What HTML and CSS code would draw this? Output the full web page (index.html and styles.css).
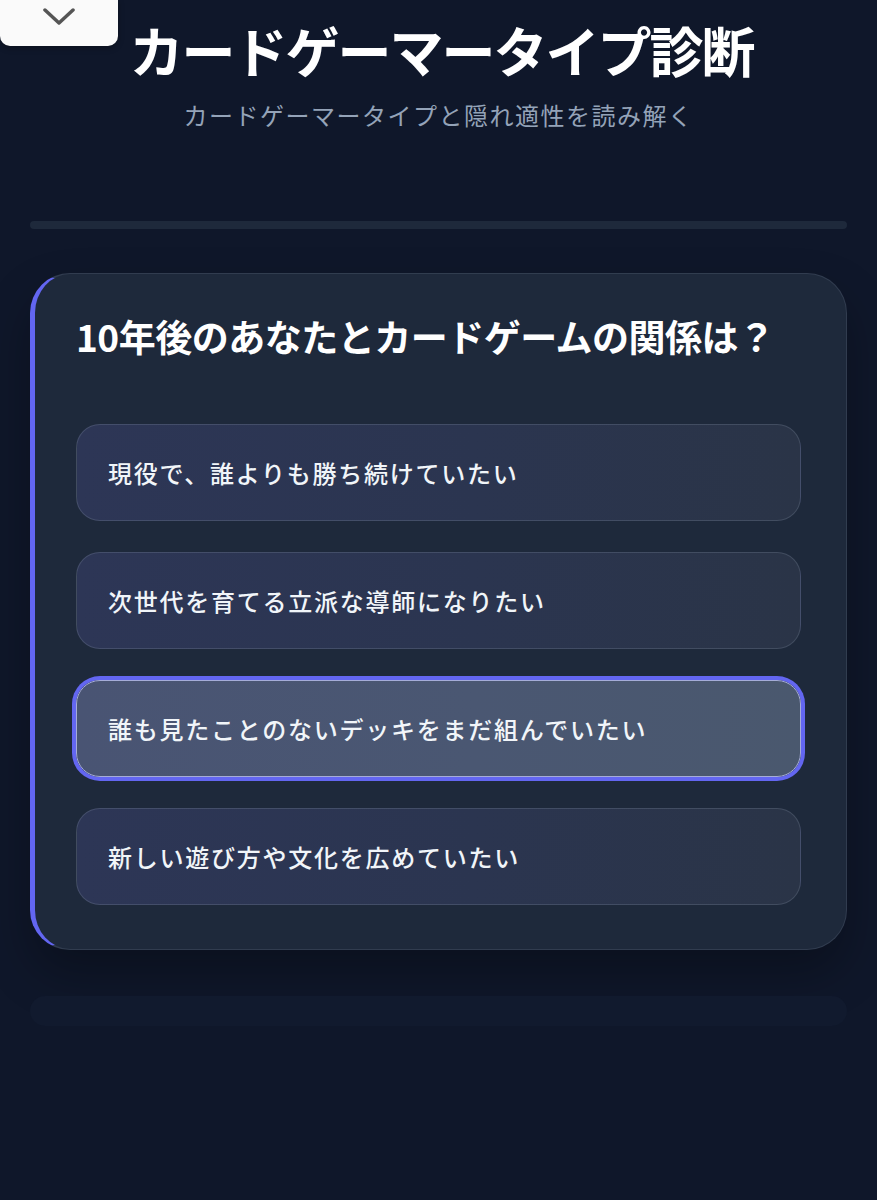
FILE: index.html
```html
<!DOCTYPE html>
<html lang="ja">
<head>
  <meta charset="UTF-8">
  <meta name="viewport" content="width=877, initial-scale=1.0">
  <title>カードゲーマータイプ診断</title>
  <link rel="stylesheet" href="styles.css">
</head>
<body>
  <button class="collapse-tab" aria-label="閉じる">
    <svg viewBox="0 0 32 20">
      <polyline points="2,3 16,16 30,3"/>
    </svg>
  </button>

  <div class="page">
    <header class="page-head">
      <h1 class="page-title">カードゲーマータイプ診断</h1>
      <p class="page-sub">カードゲーマータイプと隠れ適性を読み解く</p>
    </header>

    <div class="progress"><div class="progress-fill"></div></div>

    <section class="question-card">
      <h2 class="question-title">10年後のあなたとカードゲームの関係は？</h2>
      <div class="option-list">
        <button class="option-btn">現役で、誰よりも勝ち続けていたい</button>
        <button class="option-btn">次世代を育てる立派な導師になりたい</button>
        <button class="option-btn selected">誰も見たことのないデッキをまだ組んでいたい</button>
        <button class="option-btn">新しい遊び方や文化を広めていたい</button>
      </div>
    </section>

    <div class="nav-placeholder"></div>
  </div>
</body>
</html>
```

FILE: styles.css
```css
:root {
  --bg: #0f172a;
  --card: #1e293b;
  --point: #6366f1;
  --text-strong: #ffffff;
  --text-sub: #94a3b8;
  --option-border: rgba(148, 163, 184, 0.22);
  --font: "Noto Sans CJK JP", "Noto Sans", sans-serif;
}
body {
  margin: 0;
  padding: 0;
  background: var(--bg);
  font-family: var(--font);
  min-height: 1200px;
  box-sizing: border-box;
}
.collapse-tab {
  position: absolute;
  top: 0;
  left: 0;
  width: 118px;
  height: 46px;
  padding: 0;
  border: none;
  background: #fafafa;
  border-radius: 0 0 10px 10px;
  box-shadow: 0 2px 6px rgba(0,0,0,0.3);
  display: flex;
  justify-content: center;
  align-items: flex-start;
  cursor: pointer;
  z-index: 10;
}
.collapse-tab svg {
  width: 32px;
  height: 20px;
  margin-top: 7px;
  fill: none;
  stroke: #555;
  stroke-width: 3.5;
  stroke-linecap: round;
  stroke-linejoin: round;
}
.page {
  padding: 17px 30px 0 30px;
  display: flex;
  flex-direction: column;
}
.page-head {
  display: flex;
  flex-direction: column;
  align-items: center;
}
.page-title {
  margin: 0;
  color: var(--text-strong);
  font-size: 54px;
  line-height: 65px;
  font-weight: 700;
  letter-spacing: -2px;
  padding-left: 6px;
}
.page-sub {
  margin: 16px 0 0 0;
  color: var(--text-sub);
  font-size: 24px;
  line-height: 34px;
  font-weight: 400;
  letter-spacing: 1.5px;
}
.progress {
  margin-top: 89px;
  height: 8px;
  border-radius: 4px;
  background: #1e293b;
  overflow: hidden;
}
.progress-fill {
  width: 0;
  height: 100%;
  background: var(--point);
}
.question-card {
  margin-top: 44px;
  background: var(--card);
  border: 1px solid rgba(148, 163, 184, 0.16);
  border-left: 5px solid var(--point);
  border-radius: 40px;
  padding: 39px 45px 44px 41px;
  box-shadow: 0 24px 48px rgba(0,0,0,0.28);
}
.question-title {
  margin: 0;
  color: var(--text-strong);
  font-size: 37px;
  line-height: 46px;
  font-weight: 700;
  letter-spacing: -0.5px;
}
.option-list {
  margin-top: 65px;
  display: flex;
  flex-direction: column;
  gap: 31px;
}
.option-btn {
  width: 100%;
  height: 97px;
  padding: 0 31px;
  display: flex;
  align-items: center;
  text-align: left;
  background: linear-gradient(90deg, #2d3656 0%, #2b3550 55%, #2a3447 100%);
  border: 1px solid var(--option-border);
  border-radius: 24px;
  color: #f1f5f9;
  font-family: var(--font);
  font-size: 24px;
  font-weight: 500;
  letter-spacing: 1.75px;
  cursor: pointer;
  box-sizing: border-box;
}
.option-btn.selected {
  background: linear-gradient(90deg, #495473 0%, #4a5772 55%, #4a586e 100%);
  border: 1px solid #a5acd8;
  box-shadow: 0 0 0 4px var(--point);
}
.nav-placeholder {
  margin-top: 46px;
  height: 30px;
  border-radius: 15px;
  background: #111a2e;
}
```
